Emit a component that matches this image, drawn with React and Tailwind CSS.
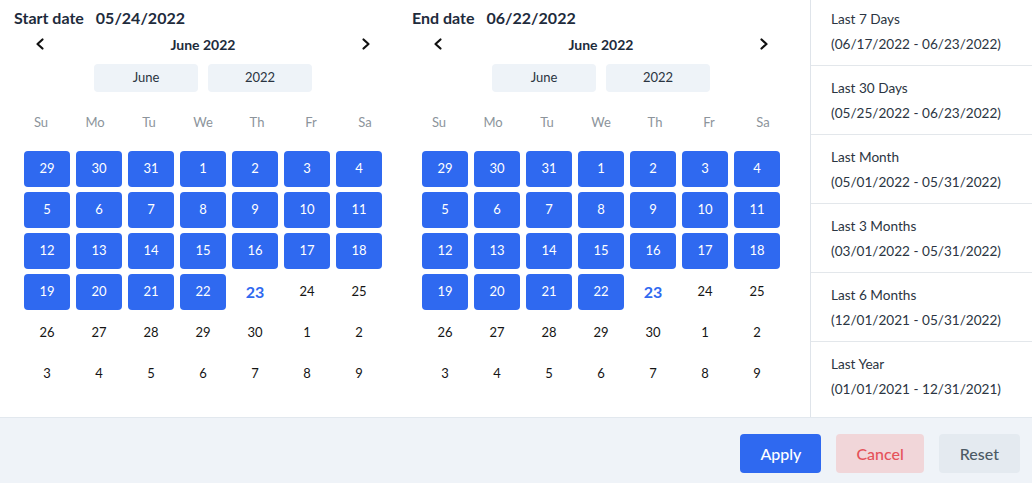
const DAYS = ['Su', 'Mo', 'Tu', 'We', 'Th', 'Fr', 'Sa']

const WEEKS = [
  [29, 30, 31, 1, 2, 3, 4],
  [5, 6, 7, 8, 9, 10, 11],
  [12, 13, 14, 15, 16, 17, 18],
  [19, 20, 21, 22, 23, 24, 25],
  [26, 27, 28, 29, 30, 1, 2],
  [3, 4, 5, 6, 7, 8, 9],
]

const PRESETS = [
  ['Last 7 Days', '(06/17/2022 - 06/23/2022)'],
  ['Last 30 Days', '(05/25/2022 - 06/23/2022)'],
  ['Last Month', '(05/01/2022 - 05/31/2022)'],
  ['Last 3 Months', '(03/01/2022 - 05/31/2022)'],
  ['Last 6 Months', '(12/01/2021 - 05/31/2022)'],
  ['Last Year', '(01/01/2021 - 12/31/2021)'],
]

function Chevron({ dir }) {
  return (
    <svg width="12" height="14" viewBox="0 0 12 14" fill="none" stroke="#111" strokeWidth={2.2} strokeLinecap="round" strokeLinejoin="round">
      {dir === 'left' ? <path d="M8.5 2.5 3.5 7l5 4.5" /> : <path d="M3.5 2.5 8.5 7l-5 4.5" />}
    </svg>
  )
}

function Calendar({ label, value }) {
  return (
    <div className="w-[398px] pl-[14px] shrink-0">
      <div className="w-[378px]">
        <div className="mt-[6px] h-[24px] flex items-center gap-[12px] text-[16px] font-bold text-[#1e2b3c] leading-[24px]">
          <span>{label}</span>
          <span>{value}</span>
        </div>
        <div className="mt-[2px] h-[24px] flex items-center justify-between px-[20px]">
          <Chevron dir="left" />
          <span className="text-[14px] font-bold text-[#1e2b3c]">June 2022</span>
          <Chevron dir="right" />
        </div>
        <div className="mt-[8px] flex justify-center gap-[10px]">
          <div className="w-[104px] h-[28px] rounded-[4px] bg-[#eef3f8] flex items-center justify-center text-[13px] text-[#2a3441]">June</div>
          <div className="w-[104px] h-[28px] rounded-[4px] bg-[#eef3f8] flex items-center justify-center text-[13px] text-[#2a3441]">2022</div>
        </div>
        <div className="mt-[17px] h-[28px] grid grid-cols-7 items-center text-[13px] text-[#8c949b] text-center">
          {DAYS.map((d) => (
            <span key={d}>{d}</span>
          ))}
        </div>
        <div className="mt-[14px] mx-[10px] grid grid-cols-[repeat(7,46px)] gap-x-[6px] gap-y-[5px]">
          {WEEKS.flatMap((week, wi) =>
            week.map((n, di) => {
              const idx = wi * 7 + di
              if (idx < 25) {
                return (
                  <div key={idx} className="h-[36px] rounded-[4px] bg-[#2f69f0] text-white text-[13px] flex items-center justify-center">
                    {n}
                  </div>
                )
              }
              if (idx === 25) {
                return (
                  <div key={idx} className="h-[36px] flex items-center justify-center text-[16px] font-bold text-[#2f69f0]">
                    {n}
                  </div>
                )
              }
              return (
                <div key={idx} className="h-[36px] flex items-center justify-center text-[13px] text-[#151515]">
                  {n}
                </div>
              )
            })
          )}
        </div>
      </div>
    </div>
  )
}

export default function App() {
  return (
    <div className="w-[1032px] h-[483px] bg-white flex flex-col overflow-hidden" style={{ fontFamily: 'Lato, "Open Sans", sans-serif' }}>
      <div className="h-[417px] flex">
        <div className="flex-1 flex">
          <Calendar label="Start date" value="05/24/2022" />
          <Calendar label="End date" value="06/22/2022" />
        </div>
        <div className="w-[222px] border-l border-[#dfe4ea] overflow-hidden">
          <div className="-mt-[3px] flex flex-col">
            {PRESETS.map(([title, range], i) => (
              <div
                key={title}
                className={`h-[69px] pl-[20px] pt-[10px] text-[13.6px] leading-[25px] text-[#2b3542] ${i < PRESETS.length - 1 ? 'border-b border-[#e3e7eb]' : ''}`}
              >
                <div>{title}</div>
                <div>{range}</div>
              </div>
            ))}
          </div>
        </div>
      </div>
      <div className="flex-1 bg-[#eff3f8] border-t border-[#e2e8ee] flex justify-end items-start pt-[16px] pr-[12px] gap-[15px]">
        <button className="h-[39px] px-[20px] rounded-[4px] bg-[#2f69f0] text-white text-[16px] font-medium">Apply</button>
        <button className="h-[39px] px-[20px] rounded-[4px] bg-[#f1d6d9] text-[#e5525a] text-[16px] font-medium">Cancel</button>
        <button className="h-[39px] px-[21px] rounded-[4px] bg-[#e4eaf0] text-[#4d5a65] text-[16px] font-medium">Reset</button>
      </div>
    </div>
  )
}
